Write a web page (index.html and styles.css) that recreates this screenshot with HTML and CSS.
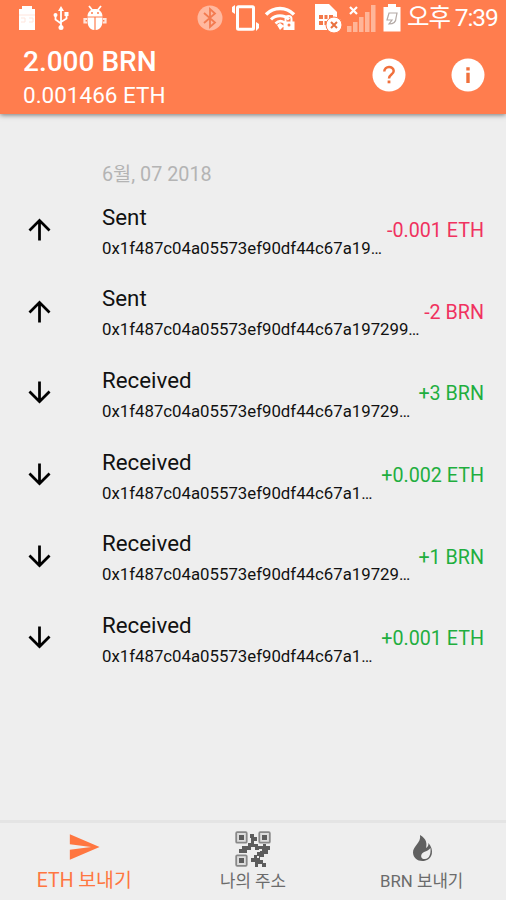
FILE: index.html
```
<!DOCTYPE html>
<html lang="ko">
<head>
  <meta charset="UTF-8" />
  <meta name="viewport" content="width=device-width, initial-scale=1.0"/>
  <title>BRN Wallet</title>
  <link rel="stylesheet" href="styles.css">
</head>
<body>

  <header>
    <div class="status-bar">
      <svg class="st-battery" width="18" height="26" viewBox="0 0 18 26"><path fill="#fff" d="M4 1h10v3h3v21H1V4h3z"/><path fill="none" stroke="#ffe5dc" stroke-width="1" d="M1 10h16M3 13h4v4H3M11 13h4v4h-4"/></svg>
      <svg class="st-usb" width="16" height="26" viewBox="0 0 16 26"><g fill="none" stroke="#fff" stroke-width="1.8"><path d="M8 4v19M2.5 10v4.500l5.500 4M13.500 9v4.500L8 17"/></g><path fill="#fff" d="M8 1l3 5H5zM11.500 7h4v4h-4z"/><circle cx="2.500" cy="10" r="2" fill="#fff"/><circle cx="8" cy="22.500" r="2.500" fill="#fff"/></svg>
      <svg class="st-bug" width="24" height="26" viewBox="0 0 24 26"><path stroke="#fff" stroke-width="1.800" d="M6 1l4 5M18 1l-4 5"/><path fill="#fff" d="M4.500 11.500c0-10 15-10 15 0zM4.500 12.500h6.900V25C6 24.500 4.500 20 4.500 16zM12.600 12.500h6.900V16c0 4-1.500 8.500-6.900 9z"/><path fill="none" stroke="#ffe5dc" stroke-width="2.200" d="M4 14H1.500v3.500H4M20 14h2.500v3.500H20"/><circle cx="9" cy="8" r="1" fill="#ff7d4e"/><circle cx="15" cy="8" r="1" fill="#ff7d4e"/></svg>

      <svg class="st-bluetooth" width="26" height="26" viewBox="0 0 26 26"><circle cx="13" cy="13" r="12.500" fill="#ffb89f"/><path fill="none" stroke="#f37b50" stroke-width="1.800" d="M7 8l11 9.500-5 4.500V4l5 4.500L7 18"/></svg>
      <svg class="st-vibrate" width="29" height="26" viewBox="0 0 29 26"><rect x="6.500" y="1.800" width="16" height="22.500" rx="1" fill="none" stroke="#fff" stroke-width="3"/><path fill="#fff" d="M4 0v9L1 7V2zM25 17l3 2v4l-3 3z"/></svg>
      <svg class="st-wifi" width="33" height="26" viewBox="0 0 33 26"><g fill="none" stroke="#fff"><path stroke-width="3.500" d="M2 9.500C10 1.500 22 1.500 30 9.500"/><path stroke-width="3" d="M7 14.500c5-5 13-5 18 0"/><path stroke-width="2.500" d="M11.500 18.500c3-3 6-3 9-1"/><path stroke-width="2" d="M21.500 17v-3c0-4 6-4 6 0v3"/></g><path fill="#fff" d="M13 20l3-2 4 3-4 4zM19.500 16.500h11V25h-11z"/><circle cx="25" cy="20" r="1.500" fill="#ff7d4e"/></svg>
      <svg class="st-sim" width="29" height="30" viewBox="0 0 29 30"><path fill="#fff" d="M1 1h14l8 8v18H1z"/><path fill="#f37849" d="M5 12h4v4H5zM10.500 12h3v4h-3zM15 12h4v4h-4zM5 18h4v4H5zM10.500 18h3v4h-3z"/><circle cx="20" cy="22" r="8" fill="#fff" stroke="#ff7d4e"/><path stroke="#e9713e" stroke-width="2" d="M17 19l6 6M23 19l-6 6"/></svg>
      <svg class="st-signal" width="29" height="27" viewBox="0 0 29 27"><path fill="#ffb598" d="M0 21h4.500v6H0zM6 17h4.500v10H6zM12 12h4.500v15H12zM18 7h4.500v20H18zM24 0h4.500v27H24z"/><path stroke="#fff" stroke-width="2.200" d="M3 2l7 7M10 2L3 9"/></svg>
      <svg class="st-charge" width="18" height="28" viewBox="0 0 18 28"><path fill="#fff" d="M5 0h8v3h4.500v24.500H.5V3H5z"/><path fill="none" stroke="#b3a9a5" stroke-width="1.200" d="M6 9h8l-1 5c0 4-3 6-7 6l3-4H4z"/></svg>
      <span class="clock">오후 7:39</span>
    </div>

    <div class="balance-bar">
      <div class="balances">
        <h1>2.000 BRN</h1>
        <p>0.001466 ETH</p>
      </div>
      <button class="round-btn">
        <svg width="34" height="34" viewBox="0 0 34 34"><circle cx="17" cy="17" r="16.500" fill="#fff"/><path fill="none" stroke="#f0703c" stroke-width="2.500" d="M12.300 13.500c0-6 9.400-6 9.400-.5 0 3.500-4.700 3.700-4.700 7.500"/><path fill="#f0703c" d="M15.600 22.500h2.800v2.800h-2.800z"/></svg>
      </button>
      <button class="round-btn">
        <svg width="34" height="34" viewBox="0 0 34 34"><circle cx="17" cy="17" r="16.500" fill="#fff"/><path fill="#f0703c" d="M15.300 9.200h3.400v3.200h-3.400zM15.300 14.800h3.400v10.200h-3.400z"/></svg>
      </button>
    </div>
  </header>

  <main>
    <h2 class="date">6월, 07 2018</h2>

    <div class="tx">
      <svg class="arrow" viewBox="0 0 24 24"><path d="M4 12l1.410 1.410L11 7.830V20h2V7.830l5.580 5.590L20 12l-8-8-8 8z"/></svg>
      <div class="info">
        <div class="kind">Sent</div>
        <div class="hash">0x1f487c04a05573ef90df44c67a19…</div>
      </div>
      <div class="amount out">-0.001 ETH</div>
    </div>

    <div class="tx">
      <svg class="arrow" viewBox="0 0 24 24"><path d="M4 12l1.410 1.410L11 7.830V20h2V7.830l5.580 5.590L20 12l-8-8-8 8z"/></svg>
      <div class="info">
        <div class="kind">Sent</div>
        <div class="hash">0x1f487c04a05573ef90df44c67a197299…</div>
      </div>
      <div class="amount out">-2 BRN</div>
    </div>

    <div class="tx">
      <svg class="arrow" viewBox="0 0 24 24"><path d="M20 12l-1.410-1.410L13 16.170V4h-2v12.170l-5.580-5.590L4 12l8 8 8-8z"/></svg>
      <div class="info">
        <div class="kind">Received</div>
        <div class="hash">0x1f487c04a05573ef90df44c67a19729…</div>
      </div>
      <div class="amount in">+3 BRN</div>
    </div>

    <div class="tx">
      <svg class="arrow" viewBox="0 0 24 24"><path d="M20 12l-1.410-1.410L13 16.170V4h-2v12.170l-5.580-5.590L4 12l8 8 8-8z"/></svg>
      <div class="info">
        <div class="kind">Received</div>
        <div class="hash">0x1f487c04a05573ef90df44c67a1…</div>
      </div>
      <div class="amount in">+0.002 ETH</div>
    </div>

    <div class="tx">
      <svg class="arrow" viewBox="0 0 24 24"><path d="M20 12l-1.410-1.410L13 16.170V4h-2v12.170l-5.580-5.590L4 12l8 8 8-8z"/></svg>
      <div class="info">
        <div class="kind">Received</div>
        <div class="hash">0x1f487c04a05573ef90df44c67a19729…</div>
      </div>
      <div class="amount in">+1 BRN</div>
    </div>

    <div class="tx">
      <svg class="arrow" viewBox="0 0 24 24"><path d="M20 12l-1.410-1.410L13 16.170V4h-2v12.170l-5.580-5.590L4 12l8 8 8-8z"/></svg>
      <div class="info">
        <div class="kind">Received</div>
        <div class="hash">0x1f487c04a05573ef90df44c67a1…</div>
      </div>
      <div class="amount in">+0.001 ETH</div>
    </div>
  </main>

  <nav>
    <a class="tab active">
      <svg width="34" height="34" viewBox="0 0 24 24"><path fill="#ff7640" d="M2.010 21L23 12 2.010 3 2 10l15 2-15 2z"/></svg>
      <span>ETH 보내기</span>
    </a>
    <a class="tab">
      <svg width="36" height="36" viewBox="0 0 36 36">
        <g fill="#ddd" stroke="#888" stroke-width="1.800"><rect x="1.200" y="1.200" width="10.500" height="10.500" rx="1"/><rect x="24.300" y="1.200" width="10.500" height="10.500" rx="1"/><rect x="1.200" y="24.300" width="10.500" height="10.500" rx="1"/></g>
        <path fill="#5c5c5c" d="M4 4h5v5H4zM27 4h5v5h-5zM4 27h5v5H4z"/>
        <path fill="#5c5c5c" d="M15 3h4v3h3v4h-3v3h4v2h5v-2h3v2h4v4h-2v4h-4v3h-4v3h3v3h3v4h-4v-3h-4v3h-3v-5h-4v-4h3v-3h3v-3h3v-2h-5v-3h-4v3h-4v3H4v-4h3v-3h6v-3h3V7h-1z"/>
        <path fill="#eee" d="M24 18h3v2h-3zM22 25h2v2h-2z"/>
      </svg>
      <span>나의 주소</span>
    </a>
    <a class="tab">
      <svg width="30" height="34" viewBox="0 0 30 34"><path fill="#606060" d="M13 4c7 4 7 9 6 13 2-1 2.500-3 2.500-5 3 4 4 7 3.300 11-1 4.500-5 7-9.500 7-5 0-9-3-9.300-8.500C5.800 15 14.500 12 13 4z"/><path fill="#eee" d="M23.500 17c.5 6-1 10.500-5.500 11-3 .3-4.500-2-3.500-4.500 1.300-3.200 6-2.500 9-6.500z"/></svg>
      <span>BRN 보내기</span>
    </a>
  </nav>

</body>
</html>
```
FILE: styles.css
```
* { margin: 0; padding: 0; box-sizing: border-box; }

body {
  display: flex;
  flex-direction: column;
  height: 100vh;
  overflow: hidden;
  background: #eee;
  color: #111;
  font-family: Roboto, 'Noto Sans CJK KR', sans-serif;
}

header {
  height: 114px;
  background: #ff7d4e;
  color: #fff;
  box-shadow: 0 1px 5px rgba(0, 0, 0, 0.5);
}

.status-bar {
  display: flex;
  align-items: center;
  height: 36px;
  padding-left: 18px;
}

.status-bar svg { flex: none; }
.st-usb { margin-left: 17px; }
.st-bug { margin-left: 14px; }
.st-bluetooth { margin-left: 90px; }
.st-vibrate { margin-left: 8px; }
.st-wifi { margin-left: 4px; }
.st-sim { margin-left: 17px; }
.st-signal { margin-left: 4px; }
.st-charge { margin-left: 7px; }

.clock {
  margin-left: 6px;
  font-size: 24.5px;
  line-height: 36px;
  letter-spacing: -1.1px;
  white-space: nowrap;
}

.balance-bar {
  display: flex;
  align-items: center;
  height: 78px;
  padding: 0 21px 0 23px;
}

.balances {
  flex: 1;
  padding-top: 7px;
}

h1 {
  font-size: 28px;
  font-weight: 500;
  line-height: 34px;
}

.balances p {
  font-size: 22.5px;
  line-height: 33px;
}

.round-btn {
  width: 34px;
  height: 34px;
  border: none;
  background: none;
}

.round-btn + .round-btn { margin-left: 45px; }
.round-btn svg { display: block; }

main { flex: 1; }

.date {
  height: 75px;
  padding: 43px 0 0 102px;
  font-size: 19.8px;
  font-weight: 400;
  line-height: 36px;
  color: #b4b4b4;
}

.tx {
  display: flex;
  align-items: center;
  height: 81.6px;
  padding: 0 22px 0 23px;
}

.arrow {
  flex: none;
  width: 33px;
  height: 33px;
}

.info {
  flex: 1;
  min-width: 0;
  margin-left: 46px;
  padding-top: 5px;
}

.kind {
  font-size: 22.3px;
  line-height: 32px;
}

.hash {
  font-size: 16.8px;
  line-height: 31px;
  white-space: nowrap;
}

.amount {
  padding-top: 2px;
  font-size: 19.7px;
  white-space: nowrap;
}

.out { color: #f0325f; }
.in { color: #1fae3f; }

nav {
  display: flex;
  height: 80px;
  border-top: 3px solid #e4e4e4;
}

.tab {
  flex: 1;
  display: flex;
  flex-direction: column;
  align-items: center;
  justify-content: space-between;
  padding: 8px 0 7px;
  font-size: 16.8px;
  line-height: 24px;
  color: #6b6b6b;
}

.tab.active {
  padding-top: 7px;
  font-size: 19.4px;
  color: #ff7640;
}
```
